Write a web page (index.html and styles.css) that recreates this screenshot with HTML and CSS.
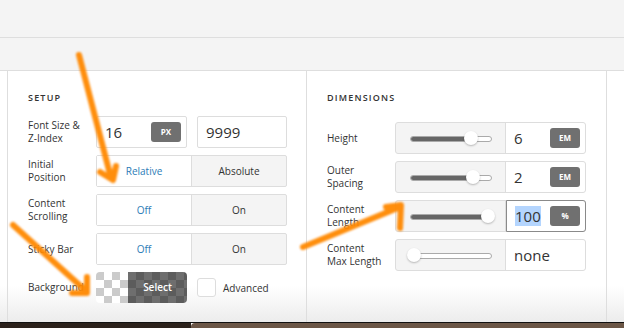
FILE: index.html
```html
<!DOCTYPE html>
<html>
<head>
  <link rel="stylesheet" href="styles.css">
</head>
<body>
  <div class="topbar"></div>
  <div class="subbar"></div>

  <div class="main">
    <div class="panel setup">
      <h3>Setup</h3>

      <div class="row">
        <label>Font Size &amp;<br>Z-Index</label>
        <div class="controls">
          <div class="field w91">
            <span class="val">16</span>
            <span class="unit">PX</span>
          </div>
          <div class="field w90">
            <span class="val">9999</span>
          </div>
        </div>
      </div>

      <div class="row">
        <label>Initial<br>Position</label>
        <div class="toggle">
          <span class="on">Relative</span>
          <span>Absolute</span>
        </div>
      </div>

      <div class="row">
        <label>Content<br>Scrolling</label>
        <div class="toggle">
          <span class="on">Off</span>
          <span>On</span>
        </div>
      </div>

      <div class="row">
        <label>Sticky Bar</label>
        <div class="toggle">
          <span class="on">Off</span>
          <span>On</span>
        </div>
      </div>

      <div class="row">
        <label>Background</label>
        <div class="controls">
          <div class="bg-select">
            <span class="light"></span>
            <span class="dark">Select</span>
          </div>
          <span class="check"></span>
          <span class="check-label">Advanced</span>
        </div>
      </div>
    </div>

    <div class="panel dims">
      <h3>Dimensions</h3>

      <div class="row">
        <label>Height</label>
        <div class="slider-field">
          <div class="slider"><div class="track"><div class="fill" style="width:60px"></div></div><span class="thumb" style="left:60px"></span></div>
          <div class="num"><span class="val">6</span><span class="unit">EM</span></div>
        </div>
      </div>

      <div class="row">
        <label>Outer<br>Spacing</label>
        <div class="slider-field">
          <div class="slider"><div class="track"><div class="fill" style="width:62px"></div></div><span class="thumb" style="left:62px"></span></div>
          <div class="num"><span class="val">2</span><span class="unit">EM</span></div>
        </div>
      </div>

      <div class="row">
        <label>Content<br>Length</label>
        <div class="slider-field">
          <div class="slider"><div class="track"><div class="fill" style="width:77px"></div></div><span class="thumb" style="left:77px"></span></div>
          <div class="num focus"><span class="val"><span class="sel">100</span></span><span class="unit">%</span></div>
        </div>
      </div>

      <div class="row">
        <label>Content<br>Max Length</label>
        <div class="slider-field">
          <div class="slider"><div class="track"><div class="fill" style="width:0"></div></div><span class="thumb" style="left:3px"></span></div>
          <div class="num"><span class="val">none</span></div>
        </div>
      </div>
    </div>
  </div>

  <div class="footer">
    <div class="footer-dark"></div>
    <div class="footer-brown"></div>
  </div>

  <svg class="arrows" width="624" height="328" viewBox="0 0 624 328">
    <defs>
      <filter id="soft"><feGaussianBlur stdDeviation="0.8"/></filter>
    </defs>
    <g fill="none" stroke="#ff8800" stroke-width="6" stroke-linecap="round" stroke-linejoin="round" filter="url(#soft)" opacity="0.95">
      <path d="M79 55 L111 178"/>
      <path d="M100 172 L113 180 L116 166"/>
      <path d="M13 225 L86 291"/>
      <path d="M87 277 L87 293 L72 293"/>
      <path d="M303 247 L400 207"/>
      <path d="M386 207 L401 205 L400 228"/>
    </g>
  </svg>
</body>
</html>
```

FILE: styles.css
```css
body {
  margin: 0;
  width: 624px;
  height: 328px;
  overflow: hidden;
  position: relative;
  font-family: "Open Sans", "Liberation Sans", sans-serif;
  color: #333;
  background: #fff;
}

.topbar {
  height: 37px;
  background: #f4f4f4;
  border-bottom: 1px solid #dedede;
}
.subbar {
  height: 32px;
  background: #f4f4f4;
  border-bottom: 1px solid #dedede;
}

.main {
  height: 251px;
  display: flex;
  padding-left: 7px;
  background: linear-gradient(to bottom, #fff 0, #fff 215px, #ececec 251px);
}

.panel {
  border-left: 1px solid #dedede;
  width: 299px;
  padding: 21px 0 0 20px;
  box-sizing: border-box;
}
.panel.dims {
  width: 301px;
  border-right: 1px solid #dedede;
}

h3 {
  margin: 0 0 12px;
  font-size: 9px;
  font-weight: 600;
  letter-spacing: 1.2px;
  text-transform: uppercase;
  line-height: 12px;
  color: #333;
}
.dims h3 {
  margin-bottom: 18px;
}

.row {
  display: flex;
  align-items: center;
  margin-bottom: 7px;
}

label {
  width: 68px;
  font-size: 10px;
  line-height: 13px;
  color: #333;
}

.controls {
  display: flex;
  align-items: center;
}

.field {
  height: 32px;
  box-sizing: border-box;
  border: 1px solid #ddd;
  border-radius: 2px;
  background: #fff;
  display: flex;
  align-items: center;
  padding: 0 5px 0 8px;
}
.w91 { width: 91px; margin-right: 10px; }
.w90 { width: 90px; }

.val {
  flex: 1;
  font-size: 15px;
  color: #333;
}

.unit {
  width: 30px;
  height: 20px;
  background: #707070;
  color: #fff;
  border-radius: 3px;
  font-size: 8px;
  font-weight: 700;
  line-height: 20px;
  text-align: center;
}

.toggle {
  display: flex;
  width: 191px;
  height: 32px;
  box-sizing: border-box;
  border: 1px solid #ddd;
  border-radius: 2px;
  background: #f4f4f4;
}
.toggle span {
  flex: 1;
  font-size: 10px;
  line-height: 30px;
  text-align: center;
  color: #333;
}
.toggle span + span {
  border-left: 1px solid #ddd;
}
.toggle .on {
  background: #fff;
  color: #2c7bb6;
}

.bg-select {
  display: flex;
  width: 91px;
  height: 31px;
  border-radius: 4px;
  overflow: hidden;
  margin-right: 10px;
}
.bg-select .light {
  width: 32px;
  background: repeating-conic-gradient(#fff 0 25%, #cbcbcb 0 50%) 0 0 / 16px 16px;
}
.bg-select .dark {
  flex: 1;
  background: repeating-conic-gradient(#5c5c5c 0 25%, #6e6e6e 0 50%) 0 0 / 16px 16px;
  color: #fff;
  font-size: 10px;
  font-weight: 600;
  line-height: 31px;
  text-align: center;
}

.check {
  width: 19px;
  height: 19px;
  box-sizing: border-box;
  border: 1px solid #ddd;
  border-radius: 3px;
  background: #fff;
  margin-right: 7px;
}
.check-label {
  font-size: 10px;
}

.slider-field {
  display: flex;
  width: 191px;
  height: 32px;
  box-sizing: border-box;
  border: 1px solid #ddd;
  border-radius: 3px;
  background: #f4f4f4;
}
.slider {
  width: 109px;
  position: relative;
  border-right: 1px solid #ddd;
}
.track {
  position: absolute;
  left: 14px;
  top: 13px;
  width: 80px;
  height: 4px;
  border: 1px solid #aaa;
  border-radius: 3px;
  background: #fff;
  overflow: hidden;
}
.fill {
  height: 100%;
  background: #666;
}
.thumb {
  position: absolute;
  top: 8px;
  width: 14px;
  height: 14px;
  margin-left: 8px;
  border-radius: 50%;
  background: #fff;
  box-shadow: 0 1px 2px rgba(0, 0, 0, 0.25);
}
.num {
  flex: 1;
  display: flex;
  align-items: center;
  background: #fff;
  padding: 0 5px 0 8px;
  border-radius: 0 3px 3px 0;
}
.num.focus {
  margin: -1px -1px -1px 0;
  border: 1px solid #8a8a8a;
}
.sel {
  background: #b4d5fe;
}

.footer {
  display: flex;
  height: 6px;
  border-top: 1px solid #111;
}
.footer-dark {
  width: 191px;
  background: #2b211b;
}
.footer-brown {
  flex: 1;
  background: #6b5646;
  border-radius: 4px 0 0 0;
}

.arrows {
  position: absolute;
  left: 0;
  top: 0;
  pointer-events: none;
}
```
